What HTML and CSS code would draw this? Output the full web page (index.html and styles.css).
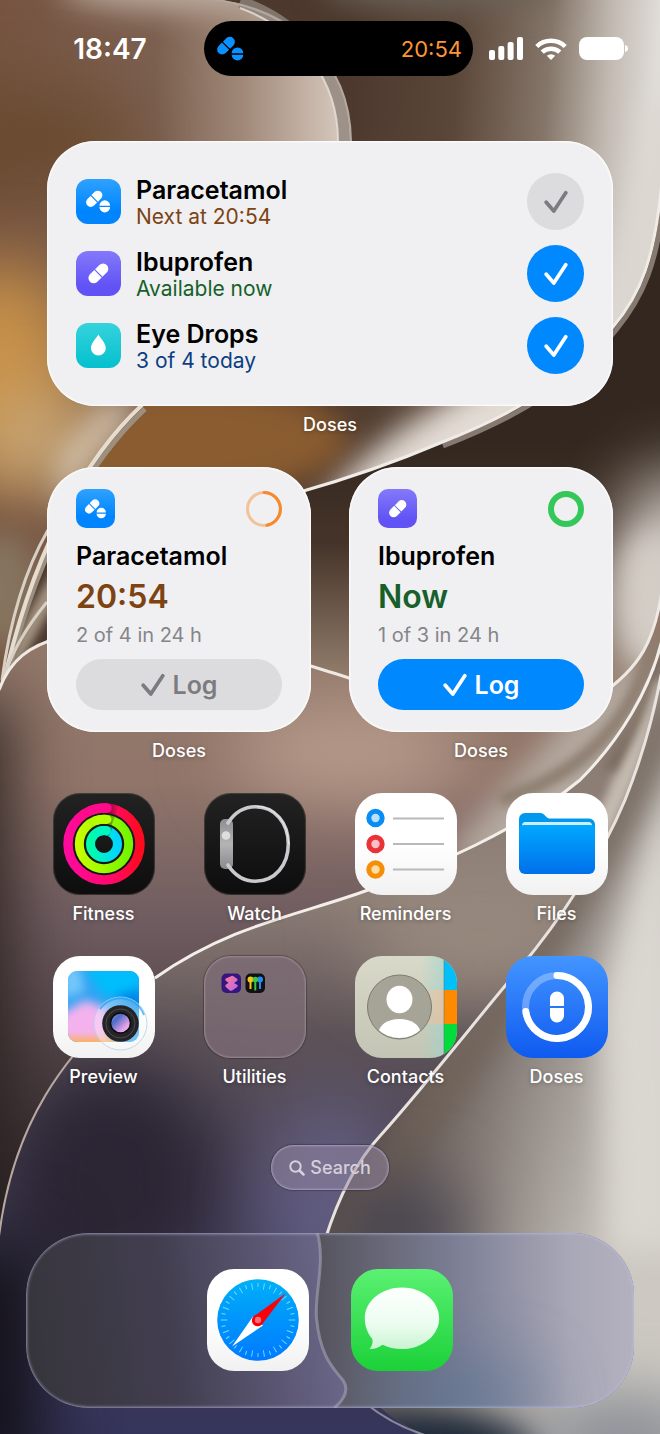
FILE: index.html
```html
<!DOCTYPE html>
<html lang="en">
<head>
    <meta charset="UTF-8">
    <meta name="viewport" content="width=device-width, initial-scale=1.0">
    <title>Home Screen</title>
    <link rel="stylesheet" href="styles.css">
</head>
<body>
    <!-- shared symbols -->
    <svg class="defs" aria-hidden="true">
        <symbol id="pills" viewBox="0 0 24 21">
            <g transform="rotate(-45 8 8)">
                <path d="M7.400 3.500v9H3.200a4.500 4.500 0 0 1 0-9z"/>
                <path d="M8.600 3.500v9h4.200a4.500 4.500 0 0 0 0-9z"/>
            </g>
            <path d="M13 14.700a5.200 5.200 0 0 1 10.400 0z"/>
            <path d="M13 16a5.200 5.200 0 0 0 10.400 0z"/>
        </symbol>
        <symbol id="pill" viewBox="-1.500 -1.500 25 25">
            <g transform="rotate(-45 11 11)">
                <path d="M10.400 5.700v10.600H4.300a5.300 5.300 0 0 1 0-10.600z"/>
                <path d="M11.600 5.700v10.600h6.100a5.300 5.300 0 0 0 0-10.600z"/>
            </g>
        </symbol>
        <symbol id="drop" viewBox="0 0 24 24">
            <path d="M12 1.500c1 2.300 7.200 8.200 7.200 13a7.200 7.400 0 0 1-14.400 0C4.800 9.700 11 3.800 12 1.500z"/>
        </symbol>
        <symbol id="check" viewBox="0 0 24 24">
            <path d="M2.200 12.200l7.600 8.800L21.800 2.800" fill="none" stroke="currentColor" stroke-width="3.700" stroke-linecap="round" stroke-linejoin="round"/>
        </symbol>
    </svg>

    <!-- wallpaper -->
    <svg class="wallpaper" viewBox="0 0 660 1434" preserveAspectRatio="none" aria-hidden="true">
        <defs>
            <filter id="b35" filterUnits="userSpaceOnUse" x="-300" y="-300" width="1260" height="2034" color-interpolation-filters="sRGB"><feGaussianBlur stdDeviation="35"/></filter>
            <filter id="b15" filterUnits="userSpaceOnUse" x="-300" y="-300" width="1260" height="2034" color-interpolation-filters="sRGB"><feGaussianBlur stdDeviation="15"/></filter>
            <filter id="b5" filterUnits="userSpaceOnUse" x="-300" y="-300" width="1260" height="2034" color-interpolation-filters="sRGB"><feGaussianBlur stdDeviation="5"/></filter>
            <linearGradient id="backFill" x1="0" y1="440" x2="0" y2="700" gradientUnits="userSpaceOnUse">
                <stop offset="0" stop-color="#33271f"/>
                <stop offset=".4" stop-color="#453429"/>
                <stop offset="1" stop-color="#a08a78"/>
            </linearGradient>
            <linearGradient id="topFill" x1="350" y1="60" x2="655" y2="80" gradientUnits="userSpaceOnUse">
                <stop offset="0" stop-color="#4c382d"/>
                <stop offset=".35" stop-color="#5b4739"/>
                <stop offset=".65" stop-color="#857669"/>
                <stop offset=".85" stop-color="#c2bab2"/>
                <stop offset="1" stop-color="#e0dcd8"/>
            </linearGradient>
            <linearGradient id="leftFill" x1="0" y1="0" x2="345" y2="0" gradientUnits="userSpaceOnUse">
                <stop offset="0" stop-color="#765441"/>
                <stop offset=".45" stop-color="#7c6050"/>
                <stop offset=".7" stop-color="#9f8878"/>
                <stop offset="1" stop-color="#d8cabf"/>
            </linearGradient>
            <linearGradient id="roseFill" x1="0" y1="640" x2="0" y2="1200" gradientUnits="userSpaceOnUse">
                <stop offset="0" stop-color="#92796a"/>
                <stop offset=".25" stop-color="#91756a"/>
                <stop offset=".5" stop-color="#6f5c60"/>
                <stop offset="1" stop-color="#2c2429"/>
            </linearGradient>
            <linearGradient id="duskFill" x1="0" y1="900" x2="0" y2="1434" gradientUnits="userSpaceOnUse">
                <stop offset="0" stop-color="#8c7d75"/>
                <stop offset=".25" stop-color="#5d5257"/>
                <stop offset=".6" stop-color="#46415a"/>
                <stop offset="1" stop-color="#35345a"/>
            </linearGradient>
            <linearGradient id="paleFill" x1="380" y1="1110" x2="640" y2="1180" gradientUnits="userSpaceOnUse">
                <stop offset="0" stop-color="#5c504d"/>
                <stop offset=".4" stop-color="#857c77"/>
                <stop offset="1" stop-color="#cdc9c2"/>
            </linearGradient>
            <clipPath id="clipB"><path d="M0 0H660V200C655 260 640 295 613 327C570 380 520 412 440 443C400 460 360 475 300 492C200 515 60 600 0 700Z"/></clipPath>
            <clipPath id="clipA"><path d="M0 0H215C290 5 350 60 351 141C352 260 200 350 140 407C80 465 30 560 0 690Z"/></clipPath>
            <clipPath id="clipC"><path d="M0 1434V687C10 660 30 645 60 638C150 615 260 650 330 672C420 700 520 740 600 695C640 668 655 640 662 590V1434Z"/></clipPath>
            <clipPath id="clipD"><path d="M-2 1245C10 1130 60 1050 155 978C230 925 300 915 368 890C430 868 520 830 580 780C620 740 650 690 662 640V1436H-2Z"/></clipPath>
            <clipPath id="clipE"><path d="M325 1240C336 1205 353 1165 380 1136C430 1080 480 1015 520 968C560 920 600 860 625 800C645 750 655 710 662 670V1436H428C360 1410 300 1330 325 1240Z"/></clipPath>
        </defs>

        <rect width="660" height="1434" fill="url(#backFill)"/>
        <ellipse cx="675" cy="570" rx="55" ry="100" fill="#ddd8d3" filter="url(#b35)"/>
        <ellipse cx="650" cy="600" rx="35" ry="70" fill="#d3cdc6" filter="url(#b15)"/>
        <ellipse cx="10" cy="680" rx="60" ry="60" fill="#5d422a" filter="url(#b15)"/>

        <g clip-path="url(#clipB)">
            <rect width="660" height="720" fill="url(#topFill)"/>
            <ellipse cx="440" cy="-15" rx="120" ry="25" fill="#6b6257" filter="url(#b15)"/>
            <path d="M560 330C610 280 640 180 650 100H720V400H560Z" fill="#dbd6d0" filter="url(#b15)"/>
            <ellipse cx="170" cy="440" rx="180" ry="60" fill="#8a5c30" filter="url(#b15)"/>
            <path d="M310 520C370 440 420 410 620 310L640 430L300 530Z" fill="#e3dcd5" filter="url(#b15)"/>
            <path d="M0 700C20 600 70 540 140 480L50 610Z" fill="#a49482" filter="url(#b5)"/>
        </g>
        <path d="M663 200C658 262 643 297 616 330C573 383 523 415 443 446" fill="none" stroke="#857970" stroke-width="5"/>
        <path d="M662 180C655 260 640 295 613 327C570 380 520 412 440 443C400 460 360 475 300 492" fill="none" stroke="#f0ebe6" stroke-width="3"/>

        <g clip-path="url(#clipA)">
            <rect width="360" height="700" fill="url(#leftFill)"/>
            <ellipse cx="190" cy="-12" rx="130" ry="22" fill="#bfaea1" filter="url(#b15)"/>
            <ellipse cx="20" cy="140" rx="120" ry="50" fill="#694a2f" filter="url(#b35)"/>
            <ellipse cx="0" cy="370" rx="80" ry="110" fill="#c8924a" filter="url(#b35)"/>
            <ellipse cx="40" cy="440" rx="60" ry="45" fill="#cbab7c" filter="url(#b35)"/>
            <path d="M60 520C70 480 100 440 140 410L110 400L60 460Z" fill="#ddd0bc" filter="url(#b15)"/>
            <ellipse cx="0" cy="590" rx="40" ry="60" fill="#86745f" filter="url(#b15)"/>
        </g>
        <path d="M240 2C300 22 344 75 344 141V150" fill="none" stroke="#8f837a" stroke-width="12" opacity=".8"/>
        <path d="M240 8C300 30 338 80 338 141V150" fill="none" stroke="#e9e2dc" stroke-width="2" opacity=".8"/>
        <path d="M200 -2C290 5 350 60 351 141V150" fill="none" stroke="#b3a89f" stroke-width="2"/>
        <path d="M145 409C83 467 33 562 4 690" fill="none" stroke="#9c8f80" stroke-width="5"/>
        <path d="M142 405C80 463 30 560 2 690" fill="none" stroke="#e6ddd0" stroke-width="4"/>
        <path d="M48 530C25 570 10 620 2 680M47 602C28 625 12 650 2 682" fill="none" stroke="#d9d0c5" stroke-width="3"/>

        <g clip-path="url(#clipC)">
            <rect y="580" width="662" height="860" fill="url(#roseFill)"/>
            <ellipse cx="350" cy="750" rx="120" ry="50" fill="#b69b8c" filter="url(#b35)"/>
            <rect x="-90" y="700" width="100" height="800" fill="#2a211e" filter="url(#b35)"/>
            <path d="M440 860L640 640L680 900Z" fill="#b5aaa0" filter="url(#b15)"/>
            <path d="M500 800C600 770 640 700 655 640" fill="none" stroke="#8d7e70" stroke-width="14" filter="url(#b5)"/>
        </g>
        <path d="M-1 690C10 660 30 645 60 638C150 615 260 650 330 672C420 700 520 740 600 695C640 668 655 640 662 590" fill="none" stroke="#efe9e3" stroke-width="3"/>

        <g clip-path="url(#clipD)">
            <rect y="620" width="662" height="820" fill="url(#duskFill)"/>
            <ellipse cx="480" cy="930" rx="120" ry="70" fill="#96887d" filter="url(#b35)"/>
            <ellipse cx="110" cy="1180" rx="110" ry="120" fill="#2b2534" filter="url(#b35)"/>
            <ellipse cx="330" cy="1210" rx="70" ry="110" fill="#6b6790" opacity=".7" filter="url(#b35)"/>
            <rect x="-60" y="1240" width="100" height="260" fill="#121017" filter="url(#b35)"/>
            <path d="M575 880C620 800 640 740 655 680" fill="none" stroke="#c4bab0" stroke-width="20" filter="url(#b5)"/>
            <path d="M610 770C635 730 650 690 660 640" fill="none" stroke="#77685b" stroke-width="10" filter="url(#b5)"/>
        </g>
        <path d="M-2 1245C10 1130 60 1050 155 978" fill="none" stroke="#b8a9a0" stroke-width="2"/>
        <path d="M155 978C230 925 300 915 368 890C430 868 520 830 580 780C620 740 650 690 662 640" fill="none" stroke="#f3eeea" stroke-width="3"/>

        <g clip-path="url(#clipE)">
            <rect x="300" y="640" width="362" height="800" fill="url(#paleFill)"/>
            <path d="M600 1000C625 900 650 830 680 760V1250H610Z" fill="#dad6d0" filter="url(#b15)"/>
            <path d="M340 1250C405 1125 565 970 672 700" fill="none" stroke="#6f6156" stroke-width="26" filter="url(#b15)"/>
            <ellipse cx="400" cy="1230" rx="70" ry="50" fill="#45424e" filter="url(#b35)"/>
            <ellipse cx="420" cy="1450" rx="120" ry="40" fill="#1f2a3a" filter="url(#b15)"/>
            <ellipse cx="620" cy="1440" rx="100" ry="40" fill="#7d828d" filter="url(#b35)"/>
        </g>
        <path d="M325 1240C336 1205 353 1165 380 1136C430 1080 480 1015 520 968C560 920 600 860 625 800C645 750 655 710 662 670" fill="none" stroke="#e9e3df" stroke-width="3"/>
        <path d="M428 1436C400 1428 380 1415 365 1403" fill="none" stroke="#8b8b9c" stroke-width="2"/>
    </svg>

    <div class="screen">
        <header class="status-bar">
            <time class="clock">18:47</time>
            <div class="island">
                <svg class="island-icon" aria-hidden="true"><use href="#pills"/></svg>
                <span>20:54</span>
            </div>
            <div class="indicators">
                <svg width="34" height="24" viewBox="0 0 34 24" fill="#fff" aria-label="Signal">
                    <rect y="13" width="6" height="10" rx="2"/>
                    <rect x="9.300" y="9" width="6" height="14" rx="2"/>
                    <rect x="18.600" y="5" width="6" height="18" rx="2"/>
                    <rect x="28" y="0" width="6" height="23" rx="2"/>
                </svg>
                <svg width="32" height="24" viewBox="0 0 32 24" fill="none" stroke="#fff" stroke-width="4.500" aria-label="Wi-Fi">
                    <path d="M1.800 9.500a20.500 20.500 0 0 1 28.400 0"/>
                    <path d="M7.200 15.200a12.800 12.800 0 0 1 17.600 0"/>
                    <path d="M11.800 18.800a6.200 6.200 0 0 1 8.400 0L16 23z" fill="#fff" stroke="none"/>
                </svg>
                <svg width="50" height="24" viewBox="0 0 50 24" fill="#fff" aria-label="Battery">
                    <rect width="45" height="23" rx="8"/>
                    <path d="M46 8c4 .5 4 6.500 0 7z"/>
                </svg>
            </div>
        </header>

        <main class="home-grid">
            <section class="item wide">
                <div class="widget">
                    <ul class="dose-list">
                        <li class="dose">
                            <span class="med-icon blue"><svg><use href="#pills"/></svg></span>
                            <div class="dose-text">
                                <h2>Paracetamol</h2>
                                <p class="wait">Next at 20:54</p>
                            </div>
                            <button class="check-btn off" aria-label="Log Paracetamol"><svg><use href="#check"/></svg></button>
                        </li>
                        <li class="dose">
                            <span class="med-icon purple"><svg><use href="#pill"/></svg></span>
                            <div class="dose-text">
                                <h2>Ibuprofen</h2>
                                <p class="ready">Available now</p>
                            </div>
                            <button class="check-btn" aria-label="Log Ibuprofen"><svg><use href="#check"/></svg></button>
                        </li>
                        <li class="dose">
                            <span class="med-icon teal"><svg><use href="#drop"/></svg></span>
                            <div class="dose-text">
                                <h2>Eye Drops</h2>
                                <p class="count">3 of 4 today</p>
                            </div>
                            <button class="check-btn" aria-label="Log Eye Drops"><svg><use href="#check"/></svg></button>
                        </li>
                    </ul>
                </div>
                <span class="label">Doses</span>
            </section>

            <section class="item half">
                <div class="widget small">
                    <div class="widget-top">
                        <span class="med-icon blue"><svg><use href="#pills"/></svg></span>
                        <svg class="ring" viewBox="0 0 36 36" fill="none" stroke="#f5892b" stroke-width="3">
                            <circle cx="18" cy="18" r="16.500" opacity=".45"/>
                            <path d="M18 1.500a16.500 16.500 0 0 1 3 32.700" stroke-linecap="round"/>
                        </svg>
                    </div>
                    <h2>Paracetamol</h2>
                    <p class="big wait">20:54</p>
                    <p class="total">2 of 4 in 24 h</p>
                    <button class="log-btn off"><svg><use href="#check"/></svg>Log</button>
                </div>
                <span class="label">Doses</span>
            </section>

            <section class="item half">
                <div class="widget small">
                    <div class="widget-top">
                        <span class="med-icon purple"><svg><use href="#pill"/></svg></span>
                        <svg class="ring" viewBox="0 0 36 36" fill="none" stroke="#34c759" stroke-width="6">
                            <circle cx="18" cy="18" r="15"/>
                        </svg>
                    </div>
                    <h2>Ibuprofen</h2>
                    <p class="big ready">Now</p>
                    <p class="total">1 of 3 in 24 h</p>
                    <button class="log-btn"><svg><use href="#check"/></svg>Log</button>
                </div>
                <span class="label">Doses</span>
            </section>

            <a class="item" href="#">
                <svg class="app-icon dark" viewBox="0 0 102 102" fill="none">
                    <defs>
                        <linearGradient id="mv"><stop offset="0" stop-color="#ff0a9c"/><stop offset=".6" stop-color="#ff0a6a"/><stop offset="1" stop-color="#ff0a1e"/></linearGradient>
                        <linearGradient id="ex"><stop offset="0" stop-color="#c4ff00"/><stop offset="1" stop-color="#74f500"/></linearGradient>
                        <linearGradient id="st"><stop offset="0" stop-color="#00ffaa"/><stop offset="1" stop-color="#00d5ff"/></linearGradient>
                        <linearGradient id="capShade"><stop offset="0" stop-color="#000" stop-opacity=".5"/><stop offset="1" stop-color="#000" stop-opacity="0"/></linearGradient>
                    </defs>
                    <circle cx="51" cy="51" r="36" stroke="url(#mv)" stroke-width="9.500"/>
                    <circle cx="51" cy="51" r="24.700" stroke="url(#ex)" stroke-width="9"/>
                    <circle cx="51" cy="51" r="13.500" stroke="url(#st)" stroke-width="9"/>
                    <path d="M54 10.400Q61 11 66 13.200L62.500 22Q58 20 54 19.900zM54 22Q59 22.500 62 23.900L58.500 32.200Q56 31.200 54 31zM54 33.300Q57 34 59.500 35.200L56 43Q55 42.500 54 42z" fill="url(#capShade)"/>
                    <path d="M37 17.800Q45 14.600 54 15.100" stroke="#ff0a8c" stroke-width="9.500" stroke-linecap="round"/>
                    <path d="M43 27.600Q48 25.900 54 26.400" stroke="#b4ff00" stroke-width="9" stroke-linecap="round"/>
                    <path d="M47 38.100Q50 37.200 53.500 37.700" stroke="#00f6be" stroke-width="9" stroke-linecap="round"/>
                </svg>
                <span class="label">Fitness</span>
            </a>

            <a class="item" href="#">
                <svg class="app-icon dark" viewBox="0 0 102 102" fill="none">
                    <defs>
                        <linearGradient id="case" x2="0" y2="1"><stop offset="0" stop-color="#8e8e92"/><stop offset=".5" stop-color="#b4b4b6"/><stop offset="1" stop-color="#8a8a8c"/></linearGradient>
                    </defs>
                    <rect x="16" y="26" width="13" height="50" rx="5" fill="url(#case)"/>
                    <path d="M24 30C31 19 40 13.800 51.500 13.800C71 13.800 84.300 30 84.300 51S71 88.200 51.500 88.200C40 88.200 31 83 24 72" stroke="#c9c9ce" stroke-width="3.600" stroke-linecap="round"/>
                    <path d="M53 13.200C72 14.500 84 30 84.600 51" stroke="#ececf0" stroke-width="1"/>
                    <circle cx="22" cy="42.500" r="4.300" fill="#dededf"/>
                </svg>
                <span class="label">Watch</span>
            </a>

            <a class="item" href="#">
                <svg class="app-icon white" viewBox="0 0 102 102">
                    <g stroke="#b9b9bb" stroke-width="2">
                        <path d="M38 25.500h51M38 51h51M38 76.500h51"/>
                    </g>
                    <g stroke-width="5">
                        <circle cx="20.500" cy="25" r="6.700" fill="#b7e0ff" stroke="#0a8cf5"/>
                        <circle cx="20.500" cy="51" r="6.700" fill="#f9c1c6" stroke="#e93338"/>
                        <circle cx="20.500" cy="76.500" r="6.700" fill="#fedca4" stroke="#f58f07"/>
                    </g>
                </svg>
                <span class="label">Reminders</span>
            </a>

            <a class="item" href="#">
                <svg class="app-icon white" viewBox="0 0 102 102">
                    <defs>
                        <linearGradient id="folder" x2="0" y2="1"><stop offset="0" stop-color="#00a8ff"/><stop offset="1" stop-color="#0070ea"/></linearGradient>
                    </defs>
                    <path d="M13 26a6 6 0 0 1 6-6h15c2 0 3.500.8 4.500 2l2.500 2.500c.6.700 1.500 1 2.500 1H83a6 6 0 0 1 6 6V50H13z" fill="#0098ef"/>
                    <path d="M16 36v-3.500a3.500 3.500 0 0 1 3.500-3.500h63a3.500 3.500 0 0 1 3.500 3.500V36z" fill="#cdeeff"/>
                    <path d="M13 36.500q0-4.500 5-4.500h66q5 0 5 4.500V75a6 6 0 0 1-6 6H19a6 6 0 0 1-6-6z" fill="url(#folder)"/>
                </svg>
                <span class="label">Files</span>
            </a>

            <a class="item" href="#">
                <svg class="app-icon white" viewBox="0 0 102 102">
                    <defs>
                        <filter id="soft" filterUnits="userSpaceOnUse" x="-20" y="-20" width="142" height="142" color-interpolation-filters="sRGB"><feGaussianBlur stdDeviation="5"/></filter>
                        <clipPath id="photo"><rect x="15" y="15" width="71" height="71" rx="9"/></clipPath>
                        <linearGradient id="lens" x2="1" y2="1"><stop offset="0" stop-color="#9d9cf5"/><stop offset=".3" stop-color="#4c6bc8"/><stop offset=".7" stop-color="#e2a0e6"/><stop offset="1" stop-color="#f7c9f0"/></linearGradient>
                    </defs>
                    <g clip-path="url(#photo)">
                        <rect x="15" y="15" width="71" height="71" fill="#32a3f2"/>
                        <g filter="url(#soft)">
                            <path d="M30 10h60v30H50z" fill="#00bdfb"/>
                            <path d="M10 10h16l6 25-22 8z" fill="#74c6fa"/>
                            <path d="M5 60l27-16 22 8 6 44H5z" fill="#f3b2ee"/>
                            <path d="M5 83h60v16H5z" fill="#ffb030"/>
                            <path d="M60 40l30-8v30z" fill="#0087e8"/>
                        </g>
                    </g>
                    <circle cx="67.500" cy="67.500" r="26.500" fill="#fff" fill-opacity=".32" stroke="#b4d2e8" stroke-opacity=".8"/>
                    <path d="M47 53a25 25 0 0 1 44 6" fill="none" stroke="#1fa2f5" stroke-width="2" opacity=".7"/>
                    <circle cx="67.500" cy="67.500" r="18.300" fill="#242326"/>
                    <circle cx="67.500" cy="67.500" r="14.500" fill="none" stroke="#4d4c50" stroke-width="1"/>
                    <circle cx="67.500" cy="67" r="10" fill="url(#lens)" stroke="#0c0b10" stroke-width="1.500"/>
                </svg>
                <span class="label">Preview</span>
            </a>

            <a class="item" href="#">
                <svg class="app-icon folder" viewBox="0 0 102 102">
                    <defs>
                        <linearGradient id="layers" x2="1" y2="1"><stop offset="0" stop-color="#ff7a8f"/><stop offset="1" stop-color="#b569ee"/></linearGradient>
                    </defs>
                    <rect x="17.500" y="17.500" width="19.500" height="19.500" rx="5" fill="#35157e"/>
                    <path d="M27.500 20q1-.5 2 .3l3.500 2.500q1.500 1.200 0 2.200l-3 2 3.200 1.800q1.300 1 0 2.200l-5 3.400q-1.200.8-2.400 0l-4-3.500q-1.200-1.200 0-2.200l2.700-2-2.700-1.900q-1.200-1 0-2.200z" fill="url(#layers)"/>
                    <rect x="41.500" y="17.500" width="19.500" height="19.500" rx="5" fill="#101112"/>
                    <g stroke-width="2">
                        <g fill="#f5c518" stroke="#f5c518"><circle cx="46.500" cy="23.500" r="2"/><path d="M46.500 26v7"/></g>
                        <g fill="#258cf5" stroke="#258cf5"><circle cx="56" cy="23.500" r="2"/><path d="M56 26v7"/></g>
                        <g fill="#3bc648" stroke="#3bc648"><circle cx="51.300" cy="23.500" r="1.800"/><path d="M51.300 26v8.500"/></g>
                    </g>
                </svg>
                <span class="label">Utilities</span>
            </a>

            <a class="item" href="#">
                <svg class="app-icon contacts" viewBox="0 0 102 102">
                    <defs>
                        <clipPath id="avatar"><circle cx="44.500" cy="51" r="31"/></clipPath>
                        <linearGradient id="tint"><stop offset="0" stop-color="#8fd8d0" stop-opacity="0"/><stop offset="1" stop-color="#8fd8d0" stop-opacity=".5"/></linearGradient>
                        <linearGradient id="tintWarm"><stop offset="0" stop-color="#f5b98a" stop-opacity="0"/><stop offset="1" stop-color="#f5b98a" stop-opacity=".5"/></linearGradient>
                    </defs>
                    <rect x="66" width="23" height="34" fill="url(#tint)"/>
                    <rect x="66" y="34" width="23" height="34" fill="url(#tintWarm)"/>
                    <rect x="66" y="68" width="23" height="34" fill="url(#tint)"/>
                    <path d="M89 0h13v34H89z" fill="#00c0fa"/>
                    <path d="M89 34h13v34H89z" fill="#ff8a00"/>
                    <path d="M89 68h13v34H89z" fill="#00dc3c"/>
                    <path d="M89 0v102" stroke="#5b7f80" stroke-width="1" opacity=".6"/>
                    <circle cx="44.500" cy="51" r="32" fill="#a5a497" stroke="#7c7b70"/>
                    <g clip-path="url(#avatar)" fill="#fff">
                        <ellipse cx="44.500" cy="43.500" rx="13" ry="13.700"/>
                        <ellipse cx="44.500" cy="77" rx="21" ry="14"/>
                    </g>
                </svg>
                <span class="label">Contacts</span>
            </a>

            <a class="item" href="#">
                <svg class="app-icon doses" viewBox="0 0 102 102" fill="none" stroke="#fff" stroke-width="7">
                    <circle cx="51" cy="51" r="31.500" opacity=".3"/>
                    <path d="M51 19.500A31.500 31.500 0 1 1 19.800 55.500" stroke-linecap="round"/>
                    <g fill="#fff" stroke="none">
                        <path d="M44 50v-7.500a7 7 0 0 1 14 0V50z"/>
                        <path d="M44 52v7.500a7 7 0 0 0 14 0V52z"/>
                    </g>
                </svg>
                <span class="label">Doses</span>
            </a>
        </main>

        <button class="search">
            <svg width="16" height="16" viewBox="0 0 16 16" fill="none" stroke="currentColor" stroke-width="2" stroke-linecap="round"><circle cx="6.500" cy="6.500" r="5.200"/><path d="M10.500 10.500l4 4" stroke-width="2.500"/></svg>
            Search
        </button>

        <nav class="dock">
            <svg class="dock-glass" viewBox="0 0 607 175" preserveAspectRatio="none" aria-hidden="true">
                <defs>
                    <linearGradient id="glassL" x1="0" y1="60" x2="300" y2="20" gradientUnits="userSpaceOnUse"><stop offset="0" stop-color="#37353c"/><stop offset=".45" stop-color="#423e50"/><stop offset="1" stop-color="#6a6688"/></linearGradient>
                    <linearGradient id="glassR" x1="290" y1="0" x2="607" y2="0" gradientUnits="userSpaceOnUse"><stop offset="0" stop-color="#55535d"/><stop offset=".45" stop-color="#7d8096"/><stop offset=".8" stop-color="#a9a8b7"/><stop offset="1" stop-color="#b4b1bf"/></linearGradient>
                </defs>
                <rect width="607" height="175" fill="url(#glassL)"/>
                <path d="M291 0C299 30 288 60 290 85C294 125 307 135 317 148C323 158 316 168 308 175H607V0Z" fill="url(#glassR)"/>
                <ellipse cx="430" cy="165" rx="90" ry="35" fill="#55708f" opacity=".7" filter="url(#b35)"/>
                <path d="M291 0C299 30 288 60 290 85C294 125 307 135 317 148C323 158 316 168 308 175" fill="none" stroke="#a5a2b6" stroke-width="3" opacity=".6"/>
            </svg>
            <a href="#" aria-label="Safari">
                <svg class="app-icon white" viewBox="0 0 102 102">
                    <defs>
                        <linearGradient id="sky" x2="0" y2="1"><stop offset="0" stop-color="#00b0f8"/><stop offset="1" stop-color="#0079ff"/></linearGradient>
                    </defs>
                    <circle cx="51" cy="51" r="40.800" fill="url(#sky)"/>
                    <circle cx="51" cy="51" r="34" fill="none" stroke="#6fdcff" stroke-width="6.500" pathLength="360" stroke-dasharray="1.600 18.400" stroke-dashoffset=".8"/>
                    <circle cx="51" cy="51" r="35" fill="none" stroke="#6fdcff" stroke-width="4" pathLength="360" stroke-dasharray="1.600 18.400" stroke-dashoffset="-9.200"/>
                    <path d="M25 77.500L46 47.500L56 56.500Z" fill="#fff"/>
                    <path d="M78.500 24.500L46.500 47.500A5.500 5.500 0 0 0 55 55.500Z" fill="#fb0008"/>
                    <circle cx="51" cy="51" r="5.500" fill="#fb0008"/>
                    <circle cx="51" cy="51" r="3.200" fill="#ff7078"/>
                </svg>
            </a>
            <a href="#" aria-label="Messages">
                <svg class="app-icon messages" viewBox="0 0 102 102">
                    <defs>
                        <linearGradient id="bubble" x2="0" y2="1"><stop offset="0" stop-color="#fdfffd"/><stop offset=".6" stop-color="#ecfdf0"/><stop offset="1" stop-color="#c9f4d2"/></linearGradient>
                    </defs>
                    <path d="M51 18.500C71.500 18.500 88.200 32 88.200 49.200S71.500 80 51 80C43.500 80 37 78.600 31.500 75.800C27.500 78.800 23 80.300 18.500 80C21 77.500 22.500 72.500 21 69.500C16.500 64 13.800 57 13.800 49.200C13.800 32 30.500 18.500 51 18.500Z" fill="url(#bubble)"/>
                </svg>
            </a>
        </nav>
    </div>
</body>
</html>
```
FILE: styles.css
```css
* {
    box-sizing: border-box;
    margin: 0;
    padding: 0;
}
body {
    position: relative;
    min-height: 100vh;
    background: #3a2e2a;
    font-family: Inter, "Liberation Sans", sans-serif;
    color: #000;
}
a {
    color: inherit;
    text-decoration: none;
}
button {
    border: none;
    font-family: inherit;
    cursor: pointer;
}
.defs {
    position: absolute;
    width: 0;
    height: 0;
}
.wallpaper {
    position: absolute;
    inset: 0;
    width: 100%;
    height: 100%;
}
.screen {
    position: relative;
    display: flex;
    flex-direction: column;
    min-height: 100vh;
    padding: 21px 0 26px;
}

/* status bar */
.status-bar {
    display: grid;
    grid-template-columns: 204fr 269px 187fr;
    align-items: center;
}
.clock {
    padding-left: 16px;
    text-align: center;
    font-size: 28px;
    font-weight: 600;
    color: #fff;
}
.island {
    display: flex;
    align-items: center;
    justify-content: space-between;
    height: 55px;
    padding: 0 11px 0 13px;
    border-radius: 28px;
    background: #000;
    color: #ff9634;
    font-size: 22px;
}
.island-icon {
    width: 27px;
    height: 27px;
    fill: #0a90ff;
}
.indicators {
    display: flex;
    gap: 12px;
    padding-left: 16px;
}

/* home grid */
.home-grid {
    display: grid;
    grid-template-columns: repeat(4, 1fr);
    gap: 32px 38px;
    padding: 65px 47px 0;
}
.item {
    display: flex;
    flex-direction: column;
    align-items: center;
    gap: 9px;
    min-width: 0;
}
.wide {
    grid-column: span 4;
}
.half {
    grid-column: span 2;
}
.label {
    line-height: 20px;
    font-size: 18px;
    font-weight: 500;
    color: #fff;
    text-shadow: 0 1px 4px rgba(0, 0, 0, 0.3);
}

/* widgets */
.widget {
    width: 100%;
    padding: 32px 29px;
    border-radius: 48px;
    background: #f0f0f2;
    box-shadow: inset 0 0 2px 1px #fff;
}
.widget h2 {
    line-height: 30px;
    font-size: 25px;
    font-weight: 600;
}
.dose-list {
    display: flex;
    flex-direction: column;
    gap: 15px;
    list-style: none;
}
.dose {
    display: flex;
    align-items: center;
    gap: 15px;
}
.dose-text {
    flex: 1;
}
.dose-text p {
    line-height: 24px;
    font-size: 21px;
}
.med-icon {
    display: flex;
    align-items: center;
    justify-content: center;
    width: 45px;
    height: 45px;
    border-radius: 12px;
}
.med-icon svg {
    width: 55%;
    height: 55%;
    fill: #fff;
}
.blue {
    background: linear-gradient(#2ea2ff, #0085ff 70%);
}
.purple {
    background: linear-gradient(#8479fb, #6052f5 80%);
}
.teal {
    background: linear-gradient(#34d3dd, #04c0cd);
}
.widget .wait {
    color: #7d4312;
}
.widget .ready {
    color: #17602a;
}
.widget .count {
    color: #0c3f82;
}
.check-btn {
    display: flex;
    align-items: center;
    justify-content: center;
    width: 57px;
    height: 57px;
    border-radius: 50%;
    background: #0088ff;
    color: #fff;
}
.check-btn svg,
.log-btn svg {
    width: 24px;
    height: 24px;
}
.widget .off {
    background: #dcdcdf;
    color: #7c7c80;
}
.small {
    padding: 22px 29px;
}
.widget-top {
    display: flex;
    align-items: center;
    justify-content: space-between;
    margin-bottom: 13px;
}
.small .med-icon {
    width: 39px;
    height: 39px;
    border-radius: 10px;
}
.ring {
    width: 36px;
    height: 36px;
}
.big {
    margin: 6px 0;
    line-height: 40px;
    font-size: 32px;
    font-weight: 600;
}
.total {
    line-height: 24px;
    font-size: 20px;
    color: #85858a;
}
.log-btn {
    display: flex;
    align-items: center;
    justify-content: center;
    gap: 8px;
    width: 100%;
    height: 51px;
    margin-top: 12px;
    border-radius: 26px;
    background: #0088ff;
    color: #fff;
    font-size: 25px;
    font-weight: 600;
}

/* app icons */
.app-icon {
    display: block;
    width: 102px;
    height: 102px;
    border-radius: 27px;
}
.dark {
    background: linear-gradient(#222, #0d0d0d);
    box-shadow: inset 0 0 1px 1px rgba(120, 110, 105, 0.4);
}
.white {
    background: linear-gradient(#fff 50%, #f1f1f2);
}
.folder {
    background: rgba(125, 108, 118, 0.75);
    box-shadow: inset 0 0 2px 1px rgba(180, 160, 170, 0.6), 0 0 1px 1px rgba(40, 30, 35, 0.4);
}
.contacts {
    background: linear-gradient(#d8d9c9, #c3c4b3);
}
.doses {
    background: linear-gradient(#4395ff, #0f5af0);
}
.messages {
    background: linear-gradient(#5bf173, #1bd138);
}

.search {
    display: flex;
    align-items: center;
    justify-content: center;
    align-self: center;
    gap: 5px;
    height: 45px;
    margin-top: 58px;
    padding: 0 18px;
    border-radius: 23px;
    background: rgba(150, 138, 165, 0.5);
    box-shadow: inset 0 0 2px 1px rgba(185, 175, 205, 0.7), 0 0 1px 1px rgba(40, 35, 50, 0.4);
    color: #d5d0da;
    font-size: 18px;
    font-weight: 500;
}

/* dock */
.dock {
    position: relative;
    display: flex;
    justify-content: center;
    gap: 42px;
    margin: 43px 26px 0;
    padding: 36px 0 37px;
    border-radius: 62px;
    overflow: hidden;
}
.dock::after {
    content: "";
    position: absolute;
    inset: 0;
    border-radius: 62px;
    box-shadow: inset 0 0 3px 1px rgba(185, 190, 225, 0.7);
    pointer-events: none;
}
.dock-glass {
    position: absolute;
    inset: 0;
    width: 100%;
    height: 100%;
}
.dock a {
    position: relative;
}
```
